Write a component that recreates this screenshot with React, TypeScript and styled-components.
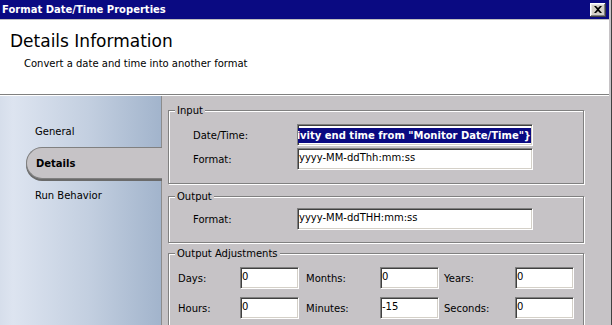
import React from "react";
import styled, { createGlobalStyle } from "styled-components";

const GlobalStyle = createGlobalStyle`
  html, body {
    margin: 0;
    padding: 0;
    background: #c6c3c6;
  }
  body {
    font-family: "DejaVu Sans", Verdana, sans-serif;
    font-size: 10px;
    color: #000;
  }
`;

const Window = styled.div`
  width: 612px;
  height: 325px;
  box-sizing: border-box;
  padding-right: 2px;
  border-right: 1px solid #404040;
  background: #c6c3c6;
  display: flex;
  flex-direction: column;
  overflow: hidden;
`;

const TitleBar = styled.div`
  height: 19px;
  flex: none;
  background: #0a0a82;
  border-bottom: 1px solid #c0c0c0;
  color: #fff;
  font-weight: bold;
  font-size: 10px;
  display: flex;
  align-items: center;
  justify-content: space-between;
  padding: 0 3px 0 2px;
`;

const CloseButton = styled.div`
  width: 16px;
  height: 14px;
  box-sizing: border-box;
  background: #d4d0c8;
  box-shadow: inset -1px -1px 0 #404040, inset 1px 1px 0 #fff,
    inset -2px -2px 0 #808080, inset 2px 2px 0 #e8e8e8;
  display: flex;
  align-items: center;
  justify-content: center;
`;

const Header = styled.div`
  height: 75px;
  flex: none;
  box-sizing: border-box;
  background: #fff;
  border-bottom: 1px solid #808080;
  padding: 11px 10px 0;
`;

const Heading = styled.div`
  font-size: 17px;
  line-height: 21px;
`;

const Subtitle = styled.div`
  margin: 5px 0 0 14px;
  line-height: 13px;
`;

const Body = styled.div`
  flex: 1;
  display: flex;
  border-top: 1px solid #fff;
  min-height: 0;
`;

const Sidebar = styled.nav`
  width: 162px;
  flex: none;
  box-sizing: border-box;
  border-right: 1px solid #8c8c8c;
  background: linear-gradient(
    to right,
    #d6deeb 0%,
    #dde4f0 8%,
    #c3cfe0 55%,
    #a2b4cc 100%
  );
  padding-top: 19px;
  display: flex;
  flex-direction: column;
`;

const NavItem = styled.div<{ $active?: boolean }>`
  height: 32px;
  box-sizing: border-box;
  display: flex;
  align-items: center;
  padding-left: 35px;
  ${(p) =>
    p.$active &&
    `
    margin-left: 26px;
    margin-right: -1px;
    padding-left: 9px;
    background: #c6c3c6;
    border: 1px solid #808080;
    border-right: none;
    border-radius: 16px 0 0 16px;
    box-shadow: 0 2px 0 #6a6a6a;
    font-weight: bold;
    position: relative;
  `}
`;

const Content = styled.div`
  flex: 1;
  padding: 14px 0 0 6px;
  display: flex;
  flex-direction: column;
`;

const Group = styled.div<{ $gap?: number }>`
  position: relative;
  width: 416px;
  box-sizing: border-box;
  border: 1px solid #808080;
  box-shadow: inset 1px 1px 0 #fff, 1px 1px 0 #fff;
  margin-bottom: ${(p) => p.$gap ?? 0}px;
`;

const Legend = styled.div`
  position: absolute;
  top: -7px;
  left: 6px;
  padding: 0 2px;
  line-height: 13px;
  background: #c6c3c6;
`;

const FieldGrid = styled.div<{ $pad: string }>`
  display: grid;
  grid-template-columns: 104px 236px;
  row-gap: 2px;
  align-items: center;
  padding: ${(p) => p.$pad};
`;

const AdjustGrid = styled.div`
  display: grid;
  grid-template-columns: 62px 59px 81px 59px 76px 59px;
  row-gap: 8px;
  align-items: center;
  padding: 13px 0 10px 9px;
`;

const Label = styled.div<{ $indent?: number }>`
  padding-left: ${(p) => p.$indent ?? 0}px;
  white-space: nowrap;
`;

const TextBox = styled.div<{ $align?: "start" | "end" }>`
  height: 22px;
  box-sizing: border-box;
  background: #fff;
  border-top: 1px solid #808080;
  border-left: 1px solid #808080;
  border-bottom: 1px solid #fff;
  border-right: 1px solid #fff;
  box-shadow: inset 1px 1px 0 #404040, inset -1px -1px 0 #d4d0c8;
  padding: 2px 1px 0 1px;
  line-height: 14px;
  white-space: nowrap;
  overflow: hidden;
  display: flex;
  justify-content: ${(p) => (p.$align === "end" ? "flex-end" : "flex-start")};
`;

const Selection = styled.span`
  display: block;
  flex: none;
  height: 15px;
  line-height: 15px;
  margin-top: 1px;
  background: #0a0a82;
  color: #fff;
  font-weight: bold;
`;

const CloseIcon = () => (
  <svg width="8" height="7" viewBox="0 0 8 7">
    <path d="M0 0h2l2 2 2-2h2L5 3.5 8 7H6L4 5 2 7H0l3-3.5z" fill="#000" />
  </svg>
);

const adjustments = [
  { label: "Days:", value: "0", indent: 0 },
  { label: "Months:", value: "0", indent: 7 },
  { label: "Years:", value: "0", indent: 5 },
  { label: "Hours:", value: "0", indent: 0 },
  { label: "Minutes:", value: "-15", indent: 7 },
  { label: "Seconds:", value: "0", indent: 5 },
];

const App: React.FC = () => (
  <>
    <GlobalStyle />
    <Window>
      <TitleBar>
        <span>Format Date/Time Properties</span>
        <CloseButton>
          <CloseIcon />
        </CloseButton>
      </TitleBar>
      <Header>
        <Heading>Details Information</Heading>
        <Subtitle>Convert a date and time into another format</Subtitle>
      </Header>
      <Body>
        <Sidebar>
          <NavItem>General</NavItem>
          <NavItem $active>Details</NavItem>
          <NavItem>Run Behavior</NavItem>
        </Sidebar>
        <Content>
          <Group $gap={12}>
            <Legend>Input</Legend>
            <FieldGrid $pad="13px 0 13px 24px">
              <Label>Date/Time:</Label>
              <TextBox $align="end">
                <Selection>
                  {'{Activity end time from "Monitor Date/Time"}'}
                </Selection>
              </TextBox>
              <Label>Format:</Label>
              <TextBox>yyyy-MM-ddThh:mm:ss</TextBox>
            </FieldGrid>
          </Group>
          <Group $gap={10}>
            <Legend>Output</Legend>
            <FieldGrid $pad="11px 0 12px 24px">
              <Label>Format:</Label>
              <TextBox>yyyy-MM-ddTHH:mm:ss</TextBox>
            </FieldGrid>
          </Group>
          <Group>
            <Legend>Output Adjustments</Legend>
            <AdjustGrid>
              {adjustments.map((f) => (
                <React.Fragment key={f.label}>
                  <Label $indent={f.indent}>{f.label}</Label>
                  <TextBox>{f.value}</TextBox>
                </React.Fragment>
              ))}
            </AdjustGrid>
          </Group>
        </Content>
      </Body>
    </Window>
  </>
);

export default App;
